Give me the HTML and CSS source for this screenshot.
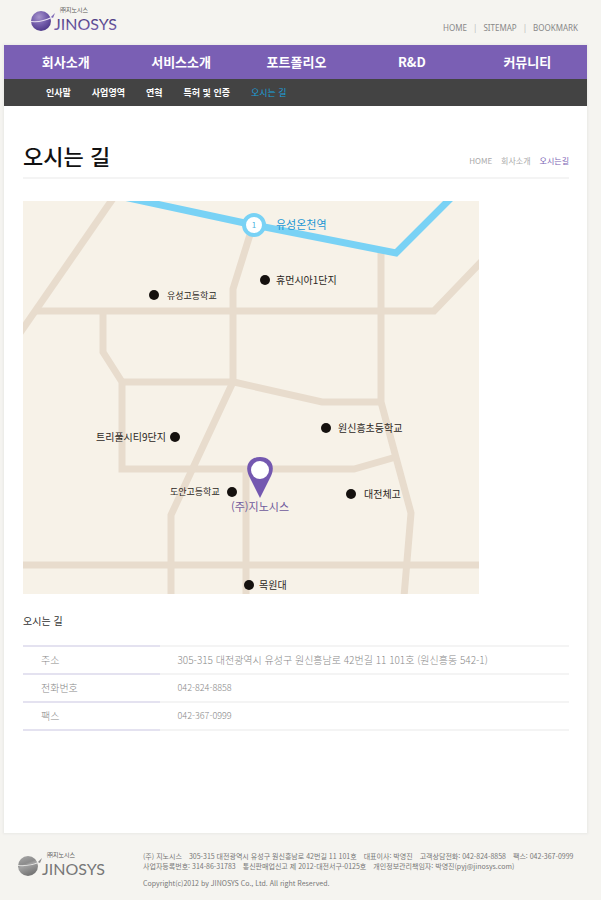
FILE: index.html
```html
<!DOCTYPE html>
<html lang="ko">
<head>
<meta charset="utf-8">
<meta name="viewport" content="width=device-width, initial-scale=1">
<title>오시는 길 - JINOSYS</title>
<link rel="stylesheet" href="styles.css">
</head>
<body>
<div class="page">
  <header class="top">
    <a class="logo" href="#" aria-label="JINOSYS">
      <svg width="92" height="28" viewBox="0 0 92 28">
        <defs>
          <radialGradient id="ball" cx="0.4" cy="0.3" r="0.75">
            <stop offset="0" stop-color="#a795cc"/>
            <stop offset="0.5" stop-color="#7660ad"/>
            <stop offset="1" stop-color="#4b3687"/>
          </radialGradient>
          <linearGradient id="word" x1="0" y1="0" x2="0" y2="1">
            <stop offset="0" stop-color="#3c2d73"/>
            <stop offset="1" stop-color="#7d68b4"/>
          </linearGradient>
        </defs>
        <circle cx="11" cy="15" r="10" fill="url(#ball)"/>
        <path d="M1 15Q12 16 21 11L24 8L22 12Q12 17 1 16Z" fill="#e6dff2"/>
        <path d="M21 11L25 7L23 12Z" fill="#7d68b4"/>
        <text class="logo-small" x="30" y="6">㈜지노시스</text>
        <text class="logo-word" x="24" y="24" fill="url(#word)">JINOSYS</text>
      </svg>
    </a>
    <nav class="util">
      <a href="#">HOME</a><a href="#">SITEMAP</a><a href="#">BOOKMARK</a>
    </nav>
  </header>

  <div class="panel">
    <nav class="main-nav">
      <a href="#">회사소개</a>
      <a href="#">서비스소개</a>
      <a href="#">포트폴리오</a>
      <a href="#">R&amp;D</a>
      <a href="#">커뮤니티</a>
    </nav>
    <nav class="sub-nav">
      <a href="#">인사말</a>
      <a href="#">사업영역</a>
      <a href="#">연혁</a>
      <a href="#">특허 및 인증</a>
      <a class="current" href="#">오시는 길</a>
    </nav>

    <main class="content">
      <div class="title-row">
        <h1>오시는 길</h1>
        <nav class="crumbs">
          <a href="#">HOME</a>
          <a href="#">회사소개</a>
          <a class="current" href="#">오시는길</a>
        </nav>
      </div>

      <svg class="map" viewBox="23 202 456 393" role="img" aria-label="약도">
        <rect x="23" y="202" width="456" height="393" fill="#f7f2e8"/>
        <g class="roads">
          <path d="M114 198L20 334"/>
          <path d="M36 312H434L482 262"/>
          <path d="M103 312V353L122 383V470H354L396 458"/>
          <path d="M122 383H234L322 403H382"/>
          <path d="M253 226L233 290V383L171 516V598"/>
          <path d="M381 250V403L411 514L404 598"/>
          <path d="M20 566H482"/>
          <path d="M246 470V598"/>
        </g>
        <path class="rail" d="M119 197L254 226L396 254L454 196"/>
        <circle cx="254" cy="226" r="10" fill="#fff" stroke="#79d2f5" stroke-width="4"/>
        <text class="station-no" x="254" y="229">1</text>
        <g fill="#15110e">
          <circle cx="265" cy="281" r="5"/>
          <circle cx="154" cy="296" r="5"/>
          <circle cx="326" cy="429" r="5"/>
          <circle cx="175" cy="438" r="5"/>
          <circle cx="232" cy="493" r="5"/>
          <circle cx="351" cy="495" r="5"/>
          <circle cx="249" cy="586" r="5"/>
        </g>
        <text class="station" x="276" y="230">유성온천역</text>
        <text class="place" x="276" y="285">휴먼시아1단지</text>
        <text class="place school" x="167" y="300">유성고등학교</text>
        <text class="place" x="338" y="433">원신흥초등학교</text>
        <text class="place" x="96" y="442">트리풀시티9단지</text>
        <text class="place school" x="170" y="496">도안고등학교</text>
        <text class="place" x="364" y="499">대전체고</text>
        <text class="place" x="259" y="590">목원대</text>
        <path d="M260 499L249 477C244 466 250 458 260 458S276 466 271 477Z" fill="#7458b0"/>
        <circle cx="260" cy="471" r="9" fill="#fff"/>
        <text class="company" x="231" y="512">(주)지노시스</text>
      </svg>

      <h2>오시는 길</h2>
      <table class="info">
        <tr><th scope="row">주소</th><td>305-315 대전광역시 유성구 원신흥남로 42번길 11 101호 (원신흥동 542-1)</td></tr>
        <tr><th scope="row">전화번호</th><td class="num">042-824-8858</td></tr>
        <tr><th scope="row">팩스</th><td class="num">042-367-0999</td></tr>
      </table>
    </main>
  </div>

  <footer class="bottom">
    <svg class="foot-logo" width="92" height="28" viewBox="0 0 92 28" role="img" aria-label="JINOSYS">
      <defs>
        <linearGradient id="grayball" x1="0" y1="0" x2="0.4" y2="1">
          <stop offset="0" stop-color="#aaa"/>
          <stop offset="0.45" stop-color="#8c8c8c"/>
          <stop offset="0.55" stop-color="#a2a2a2"/>
          <stop offset="1" stop-color="#777"/>
        </linearGradient>
      </defs>
      <circle cx="10" cy="15" r="10" fill="url(#grayball)"/>
      <path d="M0 14Q11 15 20 11L23 8L21 12Q11 16 0 15Z" fill="#e8e8e6"/>
      <path d="M20 11L24 7L22 12Z" fill="#888"/>
      <text class="logo-small" x="29" y="6">㈜지노시스</text>
      <text class="logo-word" x="24" y="24" fill="#777">JINOSYS</text>
    </svg>
    <div class="legal">
      <p><span>(주) 지노시스</span><span>305-315 대전광역시 유성구 원신흥남로 42번길 11 101호</span><span>대표이사: 박영진</span><span>고객상담전화: 042-824-8858</span><span>팩스: 042-367-0999</span></p>
      <p><span>사업자등록번호: 314-86-31783</span><span>통신판매업신고 제 2012-대전서구-0125호</span><span>개인정보관리책임자: 박영진(pyj@jinosys.com)</span></p>
      <p class="copy">Copyright(c)2012 by JINOSYS Co., Ltd. All right Reserved.</p>
    </div>
  </footer>
</div>
</body>
</html>
```
FILE: styles.css
```css
* {
  box-sizing: border-box;
}

body {
  margin: 0;
  background: #f5f4f0;
  color: #222;
  font-family: "Noto Sans CJK KR", "Noto Sans", sans-serif;
}

a {
  color: inherit;
  text-decoration: none;
}

.page {
  padding: 0 14px 0 4px;
}

.top {
  display: flex;
  justify-content: space-between;
  align-items: flex-end;
  height: 45px;
  padding: 0 9px 11px 26px;
}

.logo svg,
.foot-logo {
  display: block;
}

.logo-small {
  font-size: 6px;
  fill: #555;
}

.logo-word {
  font-family: Lato, sans-serif;
  font-size: 16px;
}

.util {
  display: flex;
  color: #888;
  font-family: "Noto Sans", sans-serif;
  font-size: 8px;
  line-height: 12px;
}

.util a + a::before {
  content: "|";
  margin: 0 6px;
  color: #bbb;
}

.panel {
  background: #fff;
  box-shadow: 0 0 2px 1px #e9e9e6;
}

.main-nav {
  display: grid;
  grid-template-columns: repeat(5, 1fr);
  padding: 0 2px 0 4px;
  background: #7a5fb4;
  color: #fff;
  font-size: 13px;
  font-weight: 700;
  line-height: 34px;
  text-align: center;
}

.sub-nav {
  display: flex;
  gap: 21px;
  padding: 0 42px;
  background: #434343;
  color: #fff;
  font-size: 9px;
  font-weight: 700;
  line-height: 27px;
}

.sub-nav .current {
  color: #1ba0dc;
  font-weight: 400;
}

.content {
  padding: 31px 18px 102px 19px;
}

.title-row {
  display: flex;
  justify-content: space-between;
  align-items: flex-end;
  padding-bottom: 4px;
  border-bottom: 2px solid #f4f4f4;
}

h1 {
  margin: 0;
  color: #111;
  font-size: 22px;
  font-weight: 500;
  line-height: 36px;
}

.crumbs {
  display: flex;
  gap: 9px;
  padding-bottom: 4px;
  color: #aaa;
  font-size: 8px;
  line-height: 16px;
}

.crumbs .current {
  color: #7a5fb4;
}

.map {
  display: block;
  width: 100%;
  max-width: 456px;
  margin-top: 22px;
}

.roads path {
  fill: none;
  stroke: #e8dccd;
  stroke-width: 7px;
}

.rail {
  fill: none;
  stroke: #79d2f5;
  stroke-width: 7px;
}

.station-no {
  fill: #4bb4e0;
  font-size: 8px;
  text-anchor: middle;
}

.station {
  fill: #1c96d4;
  font-size: 11px;
}

.place {
  fill: #2b2622;
  font-size: 10px;
}

.school {
  font-size: 9px;
}

.company {
  fill: #6f5a9c;
  font-size: 11px;
}

h2 {
  margin: 19px 0 16px;
  color: #333;
  font-size: 10px;
  font-weight: 400;
  line-height: 16px;
}

.info {
  width: 100%;
  border-collapse: collapse;
  color: #888;
  font-size: 10px;
  line-height: 26px;
}

.info th,
.info td {
  padding: 0 0 0 18px;
  border-top: 2px solid #f4f4f4;
  border-bottom: 2px solid #f4f4f4;
  font-weight: 300;
  text-align: left;
}

.info th {
  width: 25%;
  border-color: #e4e2f0;
}

.info .num {
  font-size: 9px;
}

.bottom {
  display: flex;
  gap: 33px;
  padding: 18px 0 8px 14px;
}

.foot-logo {
  flex: none;
}

.legal {
  color: #777;
  font-size: 7px;
  line-height: 10px;
  white-space: nowrap;
}

.legal p {
  display: flex;
  gap: 7px;
  margin: 0;
}

.legal .copy {
  margin-top: 7px;
}
```
